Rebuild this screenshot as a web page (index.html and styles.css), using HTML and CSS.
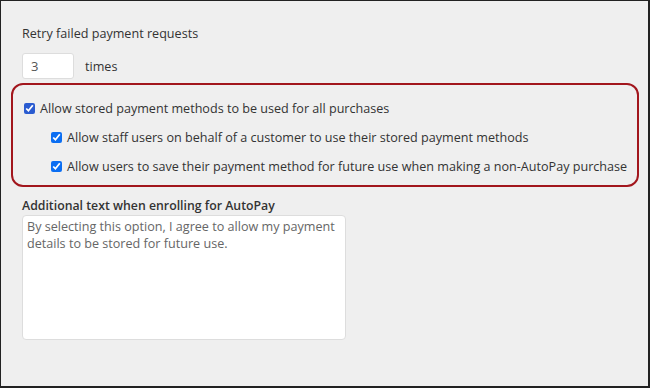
FILE: index.html
```html
<!DOCTYPE html>
<html lang="en">
  <head>
    <meta charset="UTF-8" />
    <meta name="viewport" content="width=device-width, initial-scale=1.0" />
    <title>Payment Settings</title>
    <link rel="stylesheet" href="styles.css">
  </head>
  <body>
    <div class="panel">
      <!-- Retry setting -->
      <div class="field">
        <label for="retries" class="field-label">Retry failed payment requests</label>
        <div class="retry-row">
          <input type="text" id="retries" class="retry-input" value="3" />
          <span>times</span>
        </div>
      </div>

      <!-- Stored payment options -->
      <div class="highlight">
        <label class="check">
          <input type="checkbox" checked />
          Allow stored payment methods to be used for all purchases
        </label>
        <label class="check sub">
          <input type="checkbox" checked />
          Allow staff users on behalf of a customer to use their stored payment methods
        </label>
        <label class="check sub">
          <input type="checkbox" checked />
          Allow users to save their payment method for future use when making a non-AutoPay purchase
        </label>
      </div>

      <div class="field">
        <label for="autopay-text" class="field-label bold">Additional text when enrolling for AutoPay</label>
        <textarea id="autopay-text" class="autopay-text">By selecting this option, I agree to allow my payment details to be stored for future use.</textarea>
      </div>
    </div>
  </body>
</html>
```

FILE: styles.css
```css
html,
body {
  margin: 0;
  height: 100%;
}
body {
  font-family: "Open Sans", Arial, sans-serif;
  font-size: 12.6px;
  color: #333;
  background: #efefef;
}
.panel {
  box-sizing: border-box;
  height: 388px;
  border: 1px solid #222;
  border-right-width: 2px;
  border-bottom-width: 2px;
  padding: 24px 10px 0 21px;
}
.field-label {
  display: block;
  margin-bottom: 11px;
}
.field-label.bold {
  font-weight: 600;
  font-size: 12.3px;
  margin-bottom: 1px;
  line-height: 17px;
  margin-top: 10px;
}
.retry-row {
  display: flex;
  align-items: center;
  gap: 11px;
}
.retry-input {
  box-sizing: border-box;
  width: 52px;
  height: 26px;
  padding: 0 8px;
  border: 1px solid #ddd;
  border-radius: 3px;
  font: inherit;
  font-size: 13px;
  color: #555;
}
.highlight {
  margin: 4px 0 0 -11px;
  width: 628px;
  box-sizing: border-box;
  border: 2px solid #a2161d;
  border-radius: 12px;
  padding: 9px 0 4px 11px;
}
.check {
  display: flex;
  align-items: center;
  gap: 5px;
  height: 29px;
}
.check input {
  margin: 0;
  width: 11px;
  height: 11px;
  accent-color: #2a5bd0;
}
.check.sub {
  padding-left: 27px;
}
.check.sub input {
  accent-color: #0b6ef2;
}
.autopay-text {
  display: block;
  box-sizing: border-box;
  width: 324px;
  height: 125px;
  padding: 2px 0 2px 4px;
  border: 1px solid #ddd;
  border-radius: 4px;
  font: inherit;
  font-size: 12.6px;
  line-height: 17px;
  color: #666;
  resize: none;
}
```
